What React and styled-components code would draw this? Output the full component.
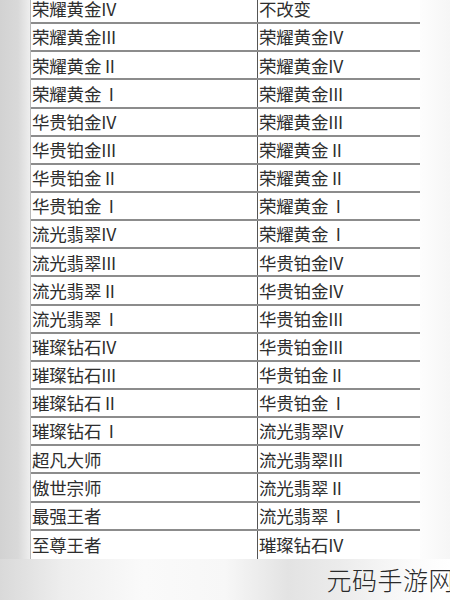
import styled, { createGlobalStyle } from 'styled-components';

const GlobalStyle = createGlobalStyle`
  html, body {
    margin: 0;
    padding: 0;
    background: #f7f7f7;
  }
  body {
    font-family: "Noto Sans CJK SC", "Noto Sans", sans-serif;
  }
`;

const Page = styled.div`
  width: 450px;
  height: 600px;
  overflow: hidden;
  display: flex;
  flex-direction: column;
  background: #f7f7f7;
`;

const Sheet = styled.div`
  display: flex;
  margin-top: -4px;
`;

const Edge = styled.div`
  width: 30px;
  flex-shrink: 0;
  background: linear-gradient(90deg, #d2d2d2 0%, #d9d9d9 60%, #e6e6e6 85%, #eeeeee 100%);
`;

const Table = styled.div`
  width: 390px;
  flex-shrink: 0;
  background: #fff;
  border-left: 1px solid #b8b8b8;
  box-sizing: border-box;
`;

const RightSide = styled.div`
  flex: 1;
  background: linear-gradient(90deg, #fdfdfd 0%, #f6f6f6 100%);
`;

const Row = styled.div`
  display: grid;
  grid-template-columns: 226px 1fr;
  height: 28.15px;
  box-sizing: border-box;
  border-bottom: ${({ $last }) => ($last ? 'none' : '2px solid #8c8c8c')};
`;

const Cell = styled.div`
  display: flex;
  align-items: center;
  padding-left: ${({ $right }) => ($right ? '1px' : '1px')};
  border-left: ${({ $right }) => ($right ? '1.5px solid #555' : 'none')};
  font-size: 17.5px;
  line-height: 1;
  color: #2e2e2e;
  white-space: pre;
  letter-spacing: -0.2px;
`;

const Footer = styled.div`
  flex: 1;
  display: flex;
  justify-content: flex-end;
  align-items: flex-start;
  padding-top: 7px;
  background: linear-gradient(90deg, #d9d9d9 0%, #eeeeee 14%, #fafafa 32%, #f7f7f7 50%, #e3e3e3 64%, #ececec 76%, #fbfbfb 92%, #ffffff 100%);
`;

const Watermark = styled.div`
  font-size: 25px;
  font-weight: 300;
  color: #2a2a2a;
  letter-spacing: 0.5px;
  margin-right: -4px;
  line-height: 1.1;
`;

const rows = [
  ['荣耀黄金IV', '不改变'],
  ['荣耀黄金III', '荣耀黄金IV'],
  ['荣耀黄金 II', '荣耀黄金IV'],
  ['荣耀黄金  I', '荣耀黄金III'],
  ['华贵铂金IV', '荣耀黄金III'],
  ['华贵铂金III', '荣耀黄金 II'],
  ['华贵铂金 II', '荣耀黄金 II'],
  ['华贵铂金  I', '荣耀黄金  I'],
  ['流光翡翠IV', '荣耀黄金  I'],
  ['流光翡翠III', '华贵铂金IV'],
  ['流光翡翠 II', '华贵铂金IV'],
  ['流光翡翠  I', '华贵铂金III'],
  ['璀璨钻石IV', '华贵铂金III'],
  ['璀璨钻石III', '华贵铂金 II'],
  ['璀璨钻石 II', '华贵铂金  I'],
  ['璀璨钻石  I', '流光翡翠IV'],
  ['超凡大师', '流光翡翠III'],
  ['傲世宗师', '流光翡翠 II'],
  ['最强王者', '流光翡翠  I'],
  ['至尊王者', '璀璨钻石IV'],
];

export default function App() {
  return (
    <>
      <GlobalStyle />
      <Page>
        <Sheet>
          <Edge />
          <Table>
            {rows.map(([from, to], i) => (
              <Row key={i} $last={i === rows.length - 1}>
                <Cell>{from}</Cell>
                <Cell $right>{to}</Cell>
              </Row>
            ))}
          </Table>
          <RightSide />
        </Sheet>
        <Footer>
          <Watermark>元码手游网</Watermark>
        </Footer>
      </Page>
    </>
  );
}
